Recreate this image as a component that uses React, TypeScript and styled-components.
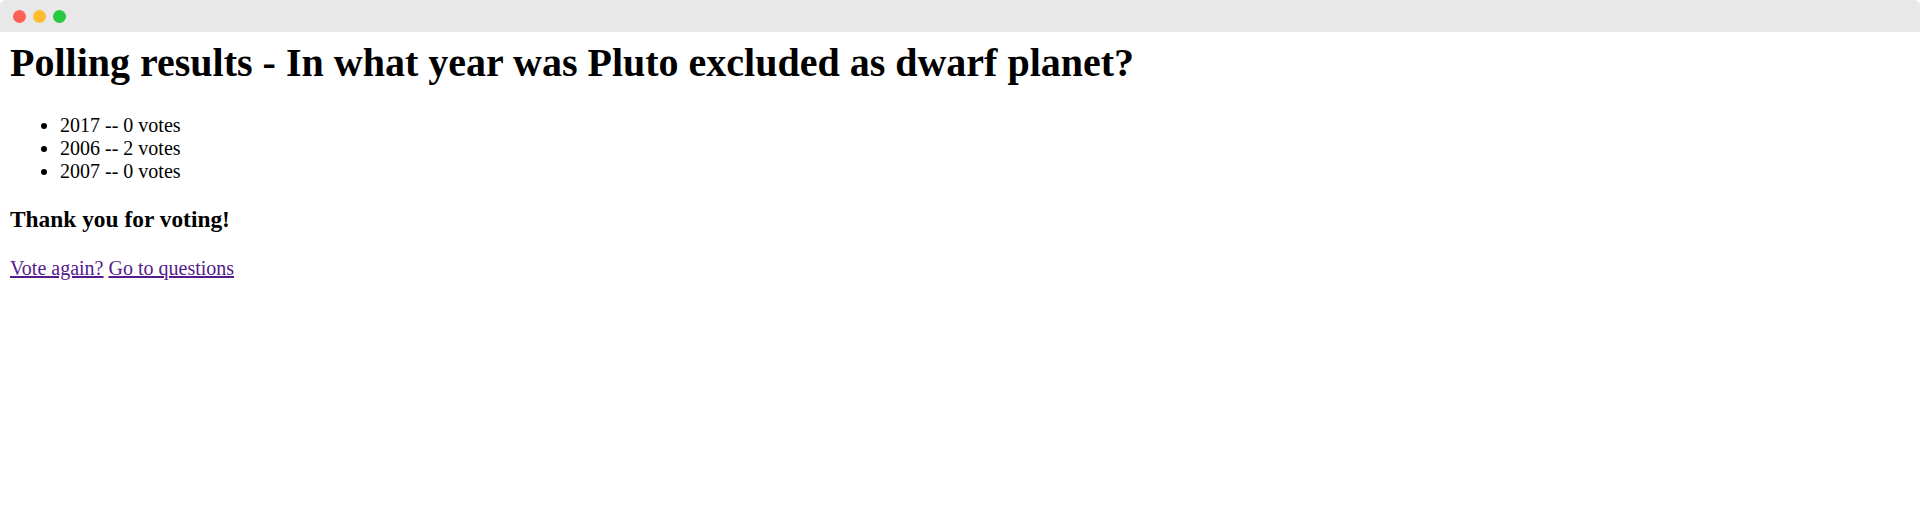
import React from "react";
import styled, { createGlobalStyle } from "styled-components";

const GlobalStyle = createGlobalStyle`
  html, body {
    margin: 0;
    padding: 0;
    background: #ffffff;
  }
`;

const Window = styled.div`
  height: 529px;
  display: flex;
  flex-direction: column;
  background: #ffffff;
  border-radius: 6px;
  overflow: hidden;
`;

const TitleBar = styled.div`
  flex: 0 0 32px;
  box-sizing: border-box;
  height: 32px;
  display: flex;
  align-items: center;
  gap: 7px;
  padding: 1px 0 0 13px;
  background: #e8e8e8;
`;

const Light = styled.span<{ $color: string }>`
  width: 13px;
  height: 13px;
  border-radius: 50%;
  background: ${(p) => p.$color};
`;

const Page = styled.main`
  display: flow-root;
  padding: 0 10px;
  font-family: "Liberation Serif", "Times New Roman", serif;
  font-size: 20px;
  color: #000;
`;

const Title = styled.h1`
  font-size: 40px;
  font-weight: bold;
  margin: 7.2px 0 0;
`;

const Results = styled.ul`
  margin: 27.8px 0 0;
  padding-left: 50px;
  list-style: disc;
`;

const Thanks = styled.h3`
  font-size: 23.4px;
  font-weight: bold;
  margin: 23.5px 0 0;
`;

const Links = styled.p`
  margin: 23.6px 0 0;
`;

const Link = styled.a`
  color: #551a8b;
  text-decoration: underline;
`;

const results = [
  { year: "2017", votes: 0 },
  { year: "2006", votes: 2 },
  { year: "2007", votes: 0 },
];

export default function App() {
  return (
    <>
      <GlobalStyle />
      <Window>
        <TitleBar>
          <Light $color="#ff5f57" />
          <Light $color="#febc2e" />
          <Light $color="#28c840" />
        </TitleBar>
        <Page>
          <Title>Polling results - In what year was Pluto excluded as dwarf planet?</Title>
          <Results>
            {results.map((r) => (
              <li key={r.year}>
                {r.year} -- {r.votes} votes
              </li>
            ))}
          </Results>
          <Thanks>Thank you for voting!</Thanks>
          <Links>
            <Link href="#vote">Vote again?</Link> <Link href="#questions">Go to questions</Link>
          </Links>
        </Page>
      </Window>
    </>
  );
}
